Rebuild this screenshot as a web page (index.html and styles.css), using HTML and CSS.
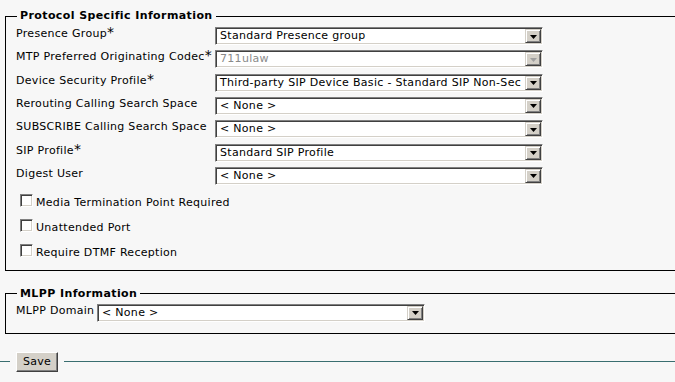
FILE: index.html
```html
<!DOCTYPE html>
<html lang="en">
<head>
<meta charset="utf-8">
<title>Protocol Specific Information</title>
<link rel="stylesheet" href="styles.css">
</head>
<body>
<div class="page">
  <fieldset class="group protocol">
    <legend>Protocol Specific Information</legend>
    <div class="fields">
      <div class="row">
        <label class="lbl">Presence Group<span class="req">*</span></label>
        <div class="select"><span class="val">Standard Presence group</span><span class="arrow"><svg width="7" height="4" viewBox="0 0 7 4"><polygon points="0,0 7,0 3.5,4"/></svg></span></div>
      </div>
      <div class="row">
        <label class="lbl">MTP Preferred Originating Codec<span class="req">*</span></label>
        <div class="select disabled"><span class="val">711ulaw</span><span class="arrow"><svg width="7" height="4" viewBox="0 0 7 4"><polygon points="0,0 7,0 3.5,4"/></svg></span></div>
      </div>
      <div class="row">
        <label class="lbl">Device Security Profile<span class="req">*</span></label>
        <div class="select"><span class="val">Third-party SIP Device Basic - Standard SIP Non-Sec</span><span class="arrow"><svg width="7" height="4" viewBox="0 0 7 4"><polygon points="0,0 7,0 3.5,4"/></svg></span></div>
      </div>
      <div class="row">
        <label class="lbl">Rerouting Calling Search Space</label>
        <div class="select"><span class="val">&lt; None &gt;</span><span class="arrow"><svg width="7" height="4" viewBox="0 0 7 4"><polygon points="0,0 7,0 3.5,4"/></svg></span></div>
      </div>
      <div class="row">
        <label class="lbl">SUBSCRIBE Calling Search Space</label>
        <div class="select"><span class="val">&lt; None &gt;</span><span class="arrow"><svg width="7" height="4" viewBox="0 0 7 4"><polygon points="0,0 7,0 3.5,4"/></svg></span></div>
      </div>
      <div class="row">
        <label class="lbl">SIP Profile<span class="req">*</span></label>
        <div class="select"><span class="val">Standard SIP Profile</span><span class="arrow"><svg width="7" height="4" viewBox="0 0 7 4"><polygon points="0,0 7,0 3.5,4"/></svg></span></div>
      </div>
      <div class="row">
        <label class="lbl">Digest User</label>
        <div class="select"><span class="val">&lt; None &gt;</span><span class="arrow"><svg width="7" height="4" viewBox="0 0 7 4"><polygon points="0,0 7,0 3.5,4"/></svg></span></div>
      </div>
    </div>
    <div class="checks">
      <label class="check"><span class="box"></span><span class="ctext">Media Termination Point Required</span></label>
      <label class="check"><span class="box"></span><span class="ctext">Unattended Port</span></label>
      <label class="check"><span class="box"></span><span class="ctext">Require DTMF Reception</span></label>
    </div>
  </fieldset>

  <fieldset class="group mlpp">
    <legend>MLPP Information</legend>
    <div class="inline-row">
      <label class="lbl short">MLPP Domain</label>
      <div class="select"><span class="val">&lt; None &gt;</span><span class="arrow"><svg width="7" height="4" viewBox="0 0 7 4"><polygon points="0,0 7,0 3.5,4"/></svg></span></div>
    </div>
  </fieldset>

  <div class="actions">
    <span class="rule lead"></span>
    <button class="btn" type="button">Save</button>
    <span class="rule"></span>
  </div>
</div>
</body>
</html>
```

FILE: styles.css
```css
html, body {
  margin: 0;
  padding: 0;
  background: #f7f7f7;
  overflow: hidden;
}

body {
  font-family: "DejaVu Sans", Verdana, sans-serif;
  font-size: 11px;
  line-height: 14px;
  letter-spacing: 0.3px;
  color: #000;
}

.page {
  width: 720px;
  padding-top: 9px;
}

.group {
  border: 1px solid #000;
  margin: 0 0 0 5px;
  padding: 4px 0 10px 10px;
}

.group legend {
  font-weight: bold;
  padding: 0 3px;
  margin-left: 1px;
  line-height: 14px;
  letter-spacing: 0.4px;
}

.mlpp {
  margin-top: 16px;
  padding-top: 3px;
  padding-bottom: 11px;
}

.fields {
  display: flex;
  flex-direction: column;
  gap: 5.33px;
}

.row {
  display: grid;
  grid-template-columns: 199px 328px;
  align-items: start;
}

.lbl {
  white-space: nowrap;
  line-height: 14px;
}

.req {
  font-size: 14px;
  line-height: 0;
}

.select {
  box-sizing: border-box;
  height: 18px;
  width: 328px;
  border: 1px solid;
  border-color: #808080 #fff #fff #808080;
  box-shadow: inset 1px 1px 0 #404040, inset -1px -1px 0 #d4d0c8;
  padding: 1px;
  background: #fff;
  display: flex;
  overflow: hidden;
}

.val {
  flex: 1;
  min-width: 0;
  padding-left: 3px;
  white-space: nowrap;
  overflow: hidden;
  line-height: 14px;
}

.arrow {
  flex: none;
  box-sizing: border-box;
  width: 16px;
  height: 14px;
  background: #d4d0c8;
  border: 1px solid;
  border-color: #d4d0c8 #404040 #404040 #d4d0c8;
  box-shadow: inset 1px 1px 0 #fff, inset -1px -1px 0 #808080;
  display: flex;
  align-items: center;
  justify-content: center;
  padding-top: 1px;
}

.arrow svg {
  display: block;
  fill: #000;
}

.disabled .val {
  color: #8a8a8a;
}

.disabled .arrow svg {
  fill: #a0a0a0;
}

.checks {
  display: flex;
  flex-direction: column;
  gap: 9px;
  margin-top: 9px;
  padding-left: 4px;
}

.check {
  display: flex;
  align-items: flex-start;
  gap: 3px;
}

.box {
  box-sizing: border-box;
  width: 13px;
  height: 13px;
  border: 1px solid;
  border-color: #808080 #fff #fff #808080;
  box-shadow: inset 1px 1px 0 #404040, inset -1px -1px 0 #d4d0c8;
  background: #fff;
}

.ctext {
  margin-top: 2px;
  line-height: 14px;
}

.inline-row {
  display: flex;
  align-items: flex-start;
}

.lbl.short {
  width: 81px;
}

.actions {
  display: flex;
  align-items: center;
  margin-top: 18px;
}

.rule {
  flex: 1;
  height: 1px;
  background: #3a6e70;
}

.rule.lead {
  flex: none;
  width: 10px;
}

.btn {
  box-sizing: border-box;
  width: 42px;
  height: 20px;
  margin: 0 6px;
  padding: 0;
  font-family: inherit;
  font-size: 11px;
  line-height: 14px;
  letter-spacing: 0.3px;
  color: #000;
  background: #d4d0c8;
  border: 1px solid;
  border-color: #fff #404040 #404040 #fff;
  box-shadow: inset -1px -1px 0 #808080;
  border-radius: 0;
}
```
